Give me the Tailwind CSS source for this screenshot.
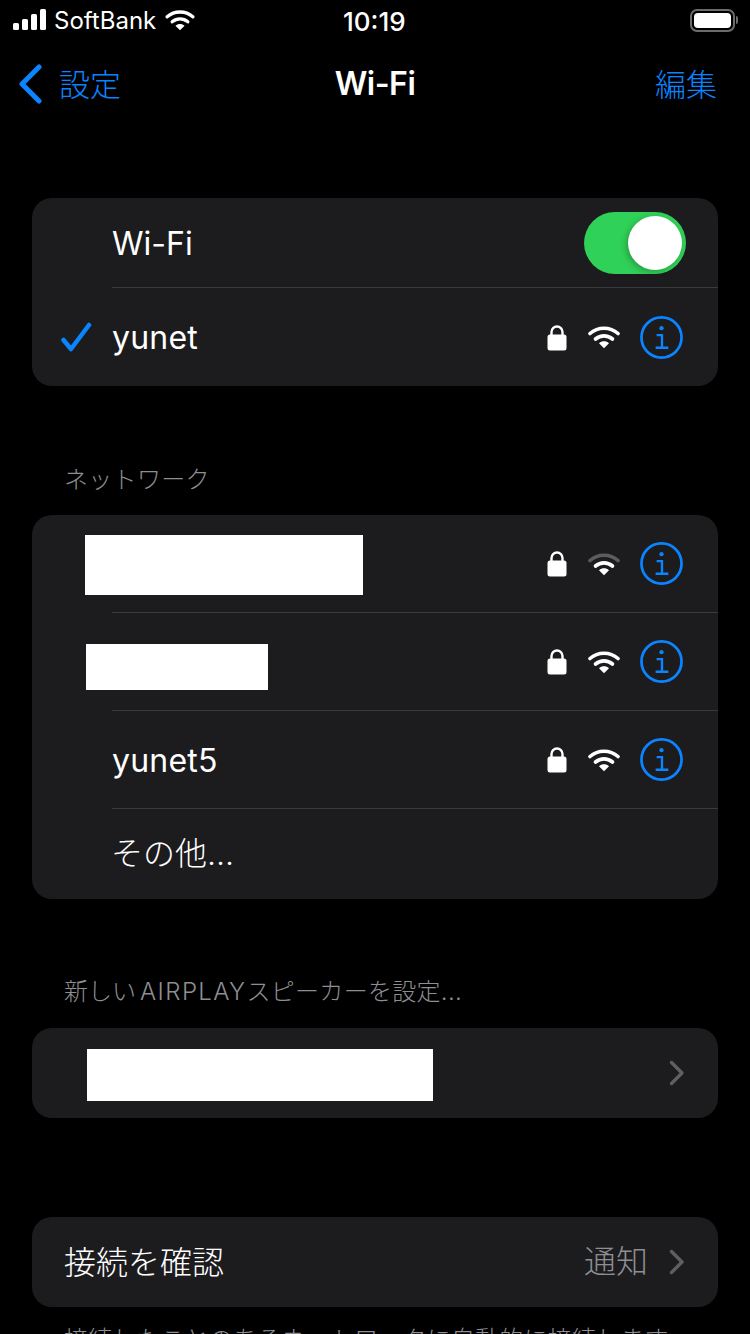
<!DOCTYPE html>
<html lang="ja">
<head>
    <meta charset="UTF-8">
    <meta name="viewport" content="width=device-width, initial-scale=1.0">
    <title>Wi-Fi</title>
    <script src="https://cdn.jsdelivr.net/npm/@tailwindcss/browser@4"></script>
</head>
<body class="bg-black">
    <svg width="0" height="0" class="absolute">
        <symbol id="lock" viewBox="0 0 20 26">
            <path d="M4.5 11V7.5a5.5 5.5 0 0 1 11 0V11" fill="none" stroke="#fff" stroke-width="2.4"/>
            <rect x="0.5" y="10" width="19" height="16" rx="2.5" fill="#fff"/>
        </symbol>
        <symbol id="wifi" viewBox="0 0 32 24">
            <path d="M2 8.5C10 1.5 22 1.5 30 8.5" fill="none" stroke="#fff" stroke-width="3.6" stroke-linecap="round"/>
            <path d="M7.5 14C12.5 9.8 19.5 9.8 24.5 14" fill="none" stroke="#fff" stroke-width="3.6" stroke-linecap="round"/>
            <path d="M11 18.2C14 15.6 18 15.6 21 18.2L16 23.2Z" fill="#fff"/>
        </symbol>
        <symbol id="wifi-weak" viewBox="0 0 32 24">
            <path d="M2 8.5C10 1.5 22 1.5 30 8.5" fill="none" stroke="#5c5c5e" stroke-width="3.6" stroke-linecap="round"/>
            <path d="M7.5 14C12.5 9.8 19.5 9.8 24.5 14" fill="none" stroke="#fff" stroke-width="3.6" stroke-linecap="round"/>
            <path d="M11 18.2C14 15.6 18 15.6 21 18.2L16 23.2Z" fill="#fff"/>
        </symbol>
        <symbol id="info" viewBox="0 0 44 44">
            <circle cx="22" cy="22" r="20.5" fill="none" stroke="#0a84ff" stroke-width="2.8"/>
            <circle cx="22" cy="12.5" r="2.2" fill="#0a84ff"/>
            <path d="M17 19.5H22.5V32M16 32.5H29" fill="none" stroke="#0a84ff" stroke-width="2.400"/>
        </symbol>
        <symbol id="chevron" viewBox="0 0 16 26">
            <path d="M2.5 2.5L13 13L2.5 23.500" fill="none" stroke="#5f5f63" stroke-width="3.400" stroke-linecap="round" stroke-linejoin="round"/>
        </symbol>
    </svg>

    <div class="w-[750px] h-[1334px] overflow-hidden bg-black text-white font-['Inter','Noto_Sans_CJK_JP',sans-serif]">
        <!-- status bar -->
        <div class="h-10 flex items-center justify-between relative">
            <div class="flex items-center pl-[13px]">
                <div class="flex items-end gap-[3px] h-[22px] mb-[2px]">
                    <div class="w-[6px] h-[7px] rounded-[1.5px] bg-white"></div>
                    <div class="w-[6px] h-[11px] rounded-[1.5px] bg-white"></div>
                    <div class="w-[6px] h-[16px] rounded-[1.5px] bg-white"></div>
                    <div class="w-[6px] h-[21px] rounded-[1.5px] bg-white"></div>
                </div>
                <span class="ml-[8px] mt-[2px] text-[24px] leading-none text-white">SoftBank</span>
                <svg class="ml-[9px] w-[30px] h-[22px]"><use href="#wifi"/></svg>
            </div>
            <span class="absolute left-[343px] mt-[3px] text-[26px] font-medium leading-none">10:19</span>
            <div class="flex items-center pr-[12px]">
                <div class="w-[45px] h-[23px] rounded-[7px] border-2 border-[#6b6b6b] p-[2px]">
                    <div class="w-full h-full rounded-[4px] bg-white"></div>
                </div>
                <div class="w-[2px] h-[8px] ml-[1px] rounded-r bg-[#6b6b6b]"></div>
            </div>
        </div>

        <!-- nav bar -->
        <div class="h-[88px] flex items-center justify-between relative">
            <div class="flex items-center pl-[18px] text-[#0a84ff]">
                <svg class="w-[24px] h-[40px]" viewBox="0 0 24 40"><path d="M21 3L4 20L21 37" fill="none" stroke="#0a84ff" stroke-width="5" stroke-linecap="round" stroke-linejoin="round"/></svg>
                <span class="ml-[17px] text-[31px] leading-none font-light">設定</span>
            </div>
            <span class="absolute left-0 right-0 text-center text-[32px] font-semibold leading-none tracking-[-0.5px]">Wi-Fi</span>
            <span class="pr-[33px] text-[31px] leading-none font-light text-[#0a84ff]">編集</span>
        </div>

        <!-- wifi card -->
        <div class="mt-[70px] mx-8 rounded-[20px] bg-[#1c1c1e]">
            <div class="h-[89px] flex items-center pl-[80px] pr-8 relative">
                <span class="mt-[2px] text-[32px] leading-none">Wi-Fi</span>
                <div class="ml-auto mt-[1px] w-[102px] h-[62px] rounded-full bg-[#30d158] relative">
                    <div class="absolute top-[4px] right-[4px] w-[54px] h-[54px] rounded-full bg-white shadow-[-2px_2px_6px_rgba(0,0,0,0.25)]"></div>
                </div>
            </div>
            <div class="ml-20 h-px bg-[#3a3a3c]"></div>
            <div class="h-[98px] flex items-center pl-[28px] pr-[35px]">
                <svg class="w-[32px] h-[30px] mr-[20px]" viewBox="0 0 32 30"><path d="M3.500 18L11 27L29 3" fill="none" stroke="#0a84ff" stroke-width="4.500" stroke-linecap="round" stroke-linejoin="round"/></svg>
                <span class="mt-[2px] text-[32px] leading-none tracking-[0.2px]">yunet</span>
                <div class="ml-auto flex items-center">
                    <svg class="w-[20px] h-[27px]"><use href="#lock"/></svg>
                    <svg class="ml-[21px] w-[32px] h-[24px]"><use href="#wifi"/></svg>
                    <svg class="ml-[20px] w-[43px] h-[43px]"><use href="#info"/></svg>
                </div>
            </div>
        </div>

        <div class="mt-[82px] pl-[64px] text-[24px] leading-none font-light tracking-[0.3px] text-[#8e8e93]">ネットワーク</div>

        <!-- networks card -->
        <div class="mt-[23px] mx-8 rounded-[20px] bg-[#1c1c1e]">
            <div class="h-[97px] flex items-center pl-[53px] pr-[35px]">
                <div class="w-[278px] h-[60px] bg-white mt-[2px]"></div>
                <div class="ml-auto flex items-center">
                    <svg class="w-[20px] h-[27px]"><use href="#lock"/></svg>
                    <svg class="ml-[21px] w-[32px] h-[24px]"><use href="#wifi-weak"/></svg>
                    <svg class="ml-[20px] w-[43px] h-[43px]"><use href="#info"/></svg>
                </div>
            </div>
            <div class="ml-20 h-px bg-[#3a3a3c]"></div>
            <div class="h-[97px] flex items-center pl-[54px] pr-[35px]">
                <div class="w-[182px] h-[46px] bg-white mt-[10px]"></div>
                <div class="ml-auto flex items-center">
                    <svg class="w-[20px] h-[27px]"><use href="#lock"/></svg>
                    <svg class="ml-[21px] w-[32px] h-[24px]"><use href="#wifi"/></svg>
                    <svg class="ml-[20px] w-[43px] h-[43px]"><use href="#info"/></svg>
                </div>
            </div>
            <div class="ml-20 h-px bg-[#3a3a3c]"></div>
            <div class="h-[97px] flex items-center pl-[80px] pr-[35px]">
                <span class="mt-[2px] text-[32px] leading-none tracking-[0.2px]">yunet5</span>
                <div class="ml-auto flex items-center">
                    <svg class="w-[20px] h-[27px]"><use href="#lock"/></svg>
                    <svg class="ml-[21px] w-[32px] h-[24px]"><use href="#wifi"/></svg>
                    <svg class="ml-[20px] w-[43px] h-[43px]"><use href="#info"/></svg>
                </div>
            </div>
            <div class="ml-20 h-px bg-[#3a3a3c]"></div>
            <div class="h-[90px] flex items-center pl-[79px]">
                <span class="text-[32px] leading-none font-light">その他...</span>
            </div>
        </div>

        <div class="mt-[81px] pl-[64px] text-[24px] leading-none font-light text-[#8e8e93]">新しい<span class="ml-[4px] tracking-[1.4px]">AIRPLAY</span><span class="tracking-[0.3px]">スピーカーを設定...</span></div>

        <!-- airplay card -->
        <div class="mt-[24px] mx-8 h-[90px] rounded-[20px] bg-[#1c1c1e] flex items-center pl-[55px] pr-[33px]">
            <div class="w-[346px] h-[52px] bg-white mt-[4px]"></div>
            <svg class="ml-auto w-[16px] h-[26px]"><use href="#chevron"/></svg>
        </div>

        <!-- ask to join card -->
        <div class="mt-[99px] mx-8 h-[90px] rounded-[20px] bg-[#1c1c1e] flex items-center pl-[32px] pr-[33px]">
            <span class="mt-[2px] text-[32px] leading-none font-light">接続を確認</span>
            <span class="ml-auto text-[32px] leading-none font-light text-[#8e8e93]">通知</span>
            <svg class="ml-[21px] w-[16px] h-[26px]"><use href="#chevron"/></svg>
        </div>

        <div class="mt-[18px] pl-[64px] text-[24px] leading-[30px] font-light tracking-[0.2px] text-[#8e8e93] whitespace-nowrap">接続したことのあるネットワークに自動的に接続します。</div>
    </div>
</body>
</html>
